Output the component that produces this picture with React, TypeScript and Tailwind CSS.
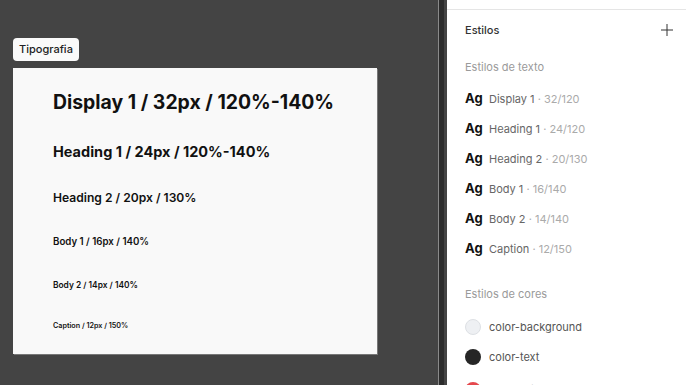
import React from "react";

const rows = [
  { text: "Display 1 / 32px / 120%-140%", cls: "h-[48px] text-[19.4px] font-bold" },
  { text: "Heading 1 / 24px / 120%-140%", cls: "h-[49px] text-[14.5px] font-bold" },
  { text: "Heading 2 / 20px / 130%", cls: "h-[45px] text-[12.1px] font-semibold" },
  { text: "Body 1 / 16px / 140%", cls: "h-[43px] text-[9.7px] font-semibold" },
  { text: "Body 2 / 14px / 140%", cls: "h-[42px] text-[8.4px] font-semibold" },
  { text: "Caption / 12px / 150%", cls: "h-[40px] text-[7.2px] font-semibold" },
];

const styles = [
  ["Display 1", "32/120"],
  ["Heading 1", "24/120"],
  ["Heading 2", "20/130"],
  ["Body 1", "16/140"],
  ["Body 2", "14/140"],
  ["Caption", "12/150"],
];

const colors = [
  { name: "color-background", cls: "bg-[#eef0f3] border border-[#dde0e4]", row: "" },
  { name: "color-text", cls: "bg-[#262626]", row: "" },
  { name: "color-primary", cls: "bg-[#e5484d]", row: "mt-[3px]" },
];

export default function App() {
  return (
    <div
      className="flex w-[686px] h-[385px] overflow-hidden"
      style={{ fontFamily: "Inter, 'Noto Sans', sans-serif" }}
    >
      <div className="w-[438px] h-full bg-[#444444] pl-[13px] pt-[38px] flex flex-col">
        <div className="self-start h-[23px] px-[6px] flex items-center rounded-[4px] bg-[#fafafa] text-[11px] text-[#222] font-medium">
          Tipografia
        </div>
        <div className="mt-[7px] w-[364px] h-[286px] bg-[#f9f9f9] pt-[11px] pl-[40px] shadow-[1px_1px_0_#777]">
          {rows.map((r) => (
            <div key={r.text} className={`flex items-center text-[#111] ${r.cls}`}>
              {r.text}
            </div>
          ))}
        </div>
      </div>
      <div className="w-[1px] h-full bg-[#8a8a8a]" />
      <div className="w-[5px] h-full bg-[#2c2c2c]" />
      <div className="w-[3px] h-full bg-[#444444]" />
      <div className="flex-1 h-full bg-white flex flex-col">
        <div className="h-[10px] border-b border-[#e5e5e5] shrink-0" />
        <div className="h-[40px] shrink-0 pl-[18px] pr-[12px] flex items-center justify-between">
          <span className="text-[11px] font-medium text-[#333]">Estilos</span>
          <svg width="14" height="14" viewBox="0 0 14 14" className="text-[#333]">
            <path d="M7 1v12M1 7h12" stroke="currentColor" strokeWidth="1" />
          </svg>
        </div>
        <div className="h-[34px] shrink-0 pl-[18px] flex items-center text-[11px] text-[#9a9a9a]">
          Estilos de texto
        </div>
        {styles.map(([n, v]) => (
          <div key={n} className="h-[30px] shrink-0 pl-[18px] flex items-center">
            <span className="w-[24px] text-[13px] font-bold text-[#111]">Ag</span>
            <span className="text-[11px] text-[#666]">{n}</span>
            <span className="text-[11px] text-[#aaa]">&nbsp;· {v}</span>
          </div>
        ))}
        <div className="mt-[15px] h-[30px] shrink-0 pl-[18px] flex items-center text-[11px] text-[#9a9a9a]">
          Estilos de cores
        </div>
        <div className="mt-[3px]">
          {colors.map((c) => (
            <div key={c.name} className={`h-[30px] pl-[18px] flex items-center ${c.row}`}>
              <span className={`w-[16px] h-[16px] rounded-full box-border shrink-0 ${c.cls}`} />
              <span className="ml-[8px] text-[11px] text-[#555]">{c.name}</span>
            </div>
          ))}
        </div>
      </div>
    </div>
  );
}
